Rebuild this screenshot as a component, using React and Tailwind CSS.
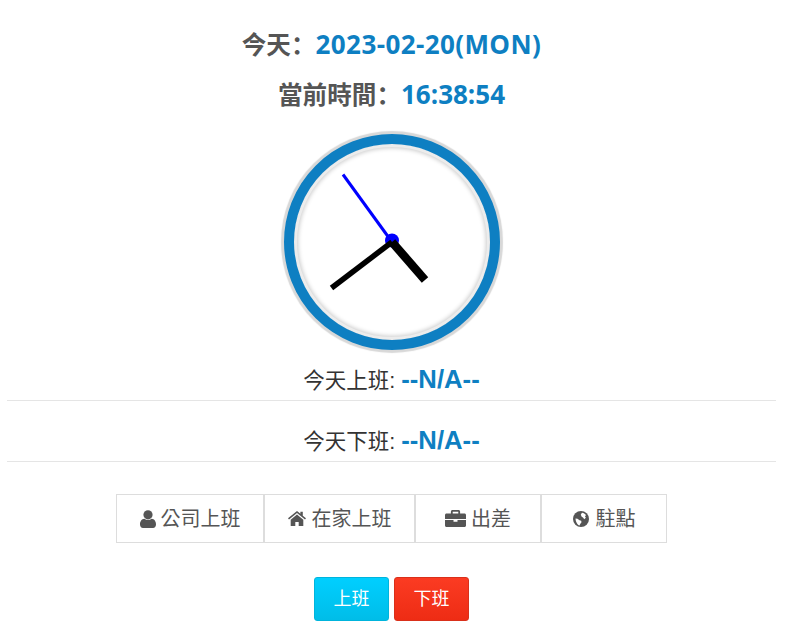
import React from "react";

const cjk = "font-['Open_Sans','Noto_Sans_CJK_TC',sans-serif]";
const arial = "font-['Liberation_Sans','Noto_Sans_CJK_TC',sans-serif]";
const colonFont = "font-['Noto_Sans_CJK_SC',sans-serif]";

const UserIcon = () => (
  <svg viewBox="0 0 16 18" className="w-[16px] h-[18px]" fill="#555">
    <circle cx="8" cy="4.800" r="4.600" />
    <path d="M0 14.500C0 11.500 1.600 9 4.400 8.800c2.100 1.700 5.100 1.700 7.200 0 2.800.2 4.400 2.700 4.400 5.700 0 2-1.200 3.400-3 3.400H3c-1.800 0-3-1.400-3-3.400z" />
  </svg>
);

const HomeIcon = () => (
  <svg viewBox="0 0 18 15" className="w-[18px] h-[15px]" fill="#555">
    <path d="M9 0 0 7.300l1 1.200L9 2l8 6.500 1-1.200-3.200-2.600V.8h-2.400v2z" />
    <path d="M9 3.600 2.700 8.700V15h4.600v-4h3.400v4h4.600V8.700z" />
  </svg>
);

const BriefcaseIcon = () => (
  <svg viewBox="0 0 21 17" className="w-[21px] h-[17px]" fill="#555">
    <path d="M7.500 0h6c.9 0 1.600.7 1.600 1.600V4h-1.800V1.800H7.700V4H5.900V1.600C5.900.7 6.600 0 7.500 0z" />
    <path d="M1.500 3.500h18c.8 0 1.500.7 1.500 1.500v4H0V5c0-.8.7-1.500 1.500-1.500z" />
    <path d="M0 10h8.500v1.800h4V10H21v5.500c0 .8-.7 1.500-1.500 1.500h-18C.7 17 0 16.300 0 15.500z" />
  </svg>
);

const GlobeIcon = () => (
  <svg viewBox="0 0 16 16" className="w-[16px] h-[16px]">
    <circle cx="8" cy="8" r="8" fill="#555" />
    <path d="M9 1.800c1.700.2 3 1 4 2.300l-1 1.300.9 1.400-1.700 1.400-1-1.400L8.500 5.500 7.800 3.500zM2.500 7.500l2 .3 2 1.500 1.700.4.300 1.600-1.300 1.700-.7 1.400C4.500 14 2.600 11 2.500 7.500z" fill="#fff" />
  </svg>
);

const shifts = [
  { label: "公司上班", icon: <UserIcon />, width: "w-[148px]", gap: "gap-[5px]" },
  { label: "在家上班", icon: <HomeIcon />, width: "w-[151px]", gap: "gap-[6px]" },
  { label: "出差", icon: <BriefcaseIcon />, width: "w-[126px]", gap: "gap-[5px]" },
  { label: "駐點", icon: <GlobeIcon />, width: "w-[126px]", gap: "gap-[7px]" },
];

const Clock = () => (
  <div className="relative w-[216px] h-[216px] rounded-full border-[10px] border-[#0e7fc2] bg-white shadow-[0_0_1px_3px_#d8d8d8,inset_0_0_0_3px_#ececec,inset_0_0_4px_4px_#cccccc]">
    <svg viewBox="0 0 196 196" className="absolute inset-0 w-[196px] h-[196px]">
      <circle cx="98" cy="96.500" r="7" fill="#0000ff" />
      <line x1="98" y1="98" x2="49" y2="30.500" stroke="#0000ff" strokeWidth="3" />
      <line x1="98" y1="98" x2="37.500" y2="144" stroke="#000" strokeWidth="5.500" />
      <line x1="98" y1="98" x2="131" y2="136" stroke="#000" strokeWidth="8.500" />
    </svg>
  </div>
);

const PunchRow = ({ label, height }) => (
  <div className={`${height} flex items-end justify-center pb-[2px] border-b border-[#e5e5e5]`}>
    <div className="leading-[32px]">
      <span className={`${arial} text-[21.5px] text-[#333]`}>{label}: </span>
      <span className={`${arial} text-[25.700px] font-bold text-[#0e7fc2]`}>--N/A--</span>
    </div>
  </div>
);

const Heading = ({ label, value, className }) => (
  <h2 className={`h-[40px] leading-[40px] font-bold text-[#555] ${className}`}>
    <span className="text-[24.6px]">{label}</span>
    <span className={`text-[24.6px] ${colonFont}`}>：</span>
    {value}
  </h2>
);

export default function App() {
  return (
    <div className={`w-[794px] h-[637px] bg-white overflow-hidden ${cjk}`}>
      <div className="w-[769px] ml-[7px] flex flex-col items-center">
        <Heading
          className="mt-[23px]"
          label="今天"
          value={<span className="text-[26px] tracking-[0.4px] text-[#0e7fc2]">2023-02-20(MON)</span>}
        />
        <Heading
          className="mt-[10px]"
          label="當前時間"
          value={<span className="text-[26px] text-[#0e7fc2]">16:38:54</span>}
        />
        <div className="mt-[21px]">
          <Clock />
        </div>
        <div className="w-full mt-[6px]">
          <PunchRow label="今天上班" height="h-[45px]" />
          <PunchRow label="今天下班" height="h-[61px]" />
        </div>
        <div className="flex mt-[32px]">
          {shifts.map((s) => (
            <button
              key={s.label}
              className={`${s.width} ${s.gap} h-[49px] flex items-center justify-center border border-[#ddd] bg-white text-[20px] text-[#555] ${arial}`}
            >
              {s.icon}
              <span>{s.label}</span>
            </button>
          ))}
        </div>
        <div className="flex gap-[5px] mt-[34px]">
          <button className={`w-[75px] h-[44px] rounded-[3px] border border-[#00b4dc] bg-gradient-to-b from-[#00cfff] to-[#00bde8] text-white text-[18px] ${arial}`}>
            上班
          </button>
          <button className={`w-[75px] h-[44px] rounded-[3px] border border-[#d9301a] bg-gradient-to-b from-[#fb3b22] to-[#ee2c14] text-white text-[18px] ${arial}`}>
            下班
          </button>
        </div>
      </div>
    </div>
  );
}
